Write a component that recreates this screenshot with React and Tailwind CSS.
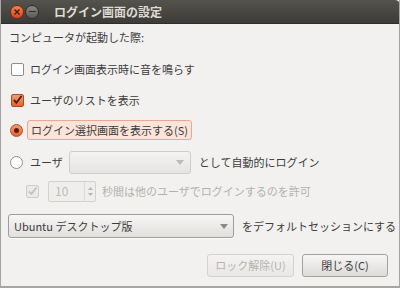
import React from 'react'

const font = { fontFamily: '"Noto Sans CJK JP", "Noto Sans", "DejaVu Sans", sans-serif' }

function Check({ checked, disabled }) {
  if (checked && disabled) {
    return (
      <span className="w-[13px] h-[13px] rounded-[2px] border border-[#cfcdca] bg-[#eceae8] flex items-center justify-center">
        <svg width="11" height="11" viewBox="0 0 11 11">
          <path d="M2 5.5 L4.5 8 L9.5 1.5" stroke="#c4c2bf" strokeWidth="1.8" fill="none" />
        </svg>
      </span>
    )
  }
  if (checked) {
    return (
      <span className="w-[13px] h-[13px] rounded-[2px] border border-[#b8491f] bg-gradient-to-b from-[#f39b73] to-[#e4622e] flex items-center justify-center">
        <svg width="12" height="12" viewBox="0 0 12 12">
          <path d="M2 6 L4.8 9 L10.5 1.5" stroke="#4a2414" strokeWidth="2" fill="none" />
        </svg>
      </span>
    )
  }
  return <span className="w-[13px] h-[13px] rounded-[2px] border border-[#8f8d8a] bg-white" />
}

function Radio({ checked }) {
  if (checked) {
    return (
      <span className="w-[13px] h-[13px] rounded-full border border-[#b8491f] bg-gradient-to-b from-[#f39b73] to-[#e4622e] flex items-center justify-center">
        <span className="w-[5px] h-[5px] rounded-full bg-[#5a1f0c]" />
      </span>
    )
  }
  return <span className="w-[13px] h-[13px] rounded-full border border-[#8f8d8a] bg-white" />
}

function Arrow({ color }) {
  return (
    <svg width="8" height="5" viewBox="0 0 8 5">
      <path d="M0 0 L8 0 L4 5 Z" fill={color} />
    </svg>
  )
}

export default function App() {
  return (
    <div className="w-[400px] h-[288px] bg-[#f2f1f0] text-[11px] text-[#3c3c3c] flex flex-col border-l border-r border-b-2 border-[#a7a6a4] overflow-hidden whitespace-nowrap" style={font}>
      {/* Title bar */}
      <div className="h-6 shrink-0 -mx-px bg-gradient-to-b from-[#55534e] to-[#3c3b37] rounded-tr-[5px] flex items-center border-b border-[#2e2d2a]">
        <span className="ml-[10px] w-[14px] h-[14px] rounded-full bg-gradient-to-b from-[#f4804f] to-[#d8481a] border border-[#7a2a10] flex items-center justify-center">
          <svg width="6" height="6" viewBox="0 0 6 6">
            <path d="M0.5 0.5 L5.5 5.5 M5.5 0.5 L0.5 5.5" stroke="#3a1a0e" strokeWidth="1.3" />
          </svg>
        </span>
        <span className="ml-[1px] w-[14px] h-[14px] rounded-full bg-gradient-to-b from-[#8a8883] to-[#5d5b57] border border-[#2e2d2a] flex items-center justify-center">
          <span className="w-[7px] h-[1.5px] bg-[#2f2e2b]" />
        </span>
        <span className="ml-[15px] text-[12px] font-bold text-[#dfdbd2]">ログイン画面の設定</span>
      </div>

      <div className="flex flex-col pl-[8px]">
        <div className="h-[26px] flex items-center">コンピュータが起動した際:</div>

        <div className="mt-[7px] h-6 flex items-center pl-[2px] gap-[6px]">
          <Check />
          <span>ログイン画面表示時に音を鳴らす</span>
        </div>

        <div className="mt-[7px] h-6 flex items-center pl-[2px] gap-[6px]">
          <Check checked />
          <span>ユーザのリストを表示</span>
        </div>

        <div className="mt-[6px] h-6 flex items-center pl-[1px] gap-[4px]">
          <Radio checked />
          <span className="h-[20px] px-[3px] flex items-center rounded-[3px] border border-[#eaa88c] bg-[#fbe4d9]">
            ログイン選択画面を表示する(S)
          </span>
        </div>

        <div className="mt-[8px] h-6 flex items-center pl-[1px]">
          <Radio />
          <span className="ml-[7px]">ユーザ</span>
          <span className="ml-[6px] w-[122px] h-[23px] rounded-[3px] border border-[#cfcdca] bg-gradient-to-b from-[#f4f3f2] to-[#e6e4e2] flex items-center justify-end pr-[6px]">
            <Arrow color="#bcbab7" />
          </span>
          <span className="ml-[8px]">として自動的にログイン</span>
        </div>

        <div className="mt-[5px] h-6 flex items-center pl-[17px]">
          <Check checked disabled />
          <span className="ml-[9px] w-[48px] h-[21px] rounded-[2px] border border-[#d3d1ce] bg-[#efeeed] flex items-center">
            <span className="flex-1 pl-[6px] text-[12px] text-[#bdbbb8]">10</span>
            <span className="w-[11px] h-full border-l border-[#dcdad7] flex flex-col items-center justify-center gap-[3px]">
              <svg width="5" height="3" viewBox="0 0 5 3"><path d="M0 3 L2.5 0 L5 3 Z" fill="#b8b6b3" /></svg>
              <svg width="5" height="3" viewBox="0 0 5 3"><path d="M0 0 L2.5 3 L5 0 Z" fill="#b8b6b3" /></svg>
            </span>
          </span>
          <span className="ml-[6px] text-[#b3b1ae]">秒間は他のユーザでログインするのを許可</span>
        </div>

        <div className="mt-[11px] h-6 flex items-center">
          <span className="w-[226px] h-6 -ml-px rounded-[3px] border border-[#9f9d9a] bg-gradient-to-b from-[#f7f6f5] to-[#e2e0dd] flex items-center px-[5px] shadow-[0_1px_0_#ffffff]">
            <span className="flex-1">Ubuntu デスクトップ版</span>
            <Arrow color="#8b8986" />
          </span>
          <span className="ml-[8px]">をデフォルトセッションにする</span>
        </div>

        <div className="mt-[16px] h-[22px] flex items-center justify-end pr-[11px] gap-[8px]">
          <span className="w-[87px] h-[23px] rounded-[3px] border border-[#d5d3d0] bg-gradient-to-b from-[#f4f3f2] to-[#eae8e6] flex items-center justify-center text-[#b5b3b0]">
            ロック解除(U)
          </span>
          <span className="w-[86px] h-[23px] rounded-[3px] border border-[#a3a19e] bg-gradient-to-b from-[#f7f6f5] to-[#dedcd9] flex items-center justify-center">
            閉じる(C)
          </span>
        </div>
      </div>
    </div>
  )
}
